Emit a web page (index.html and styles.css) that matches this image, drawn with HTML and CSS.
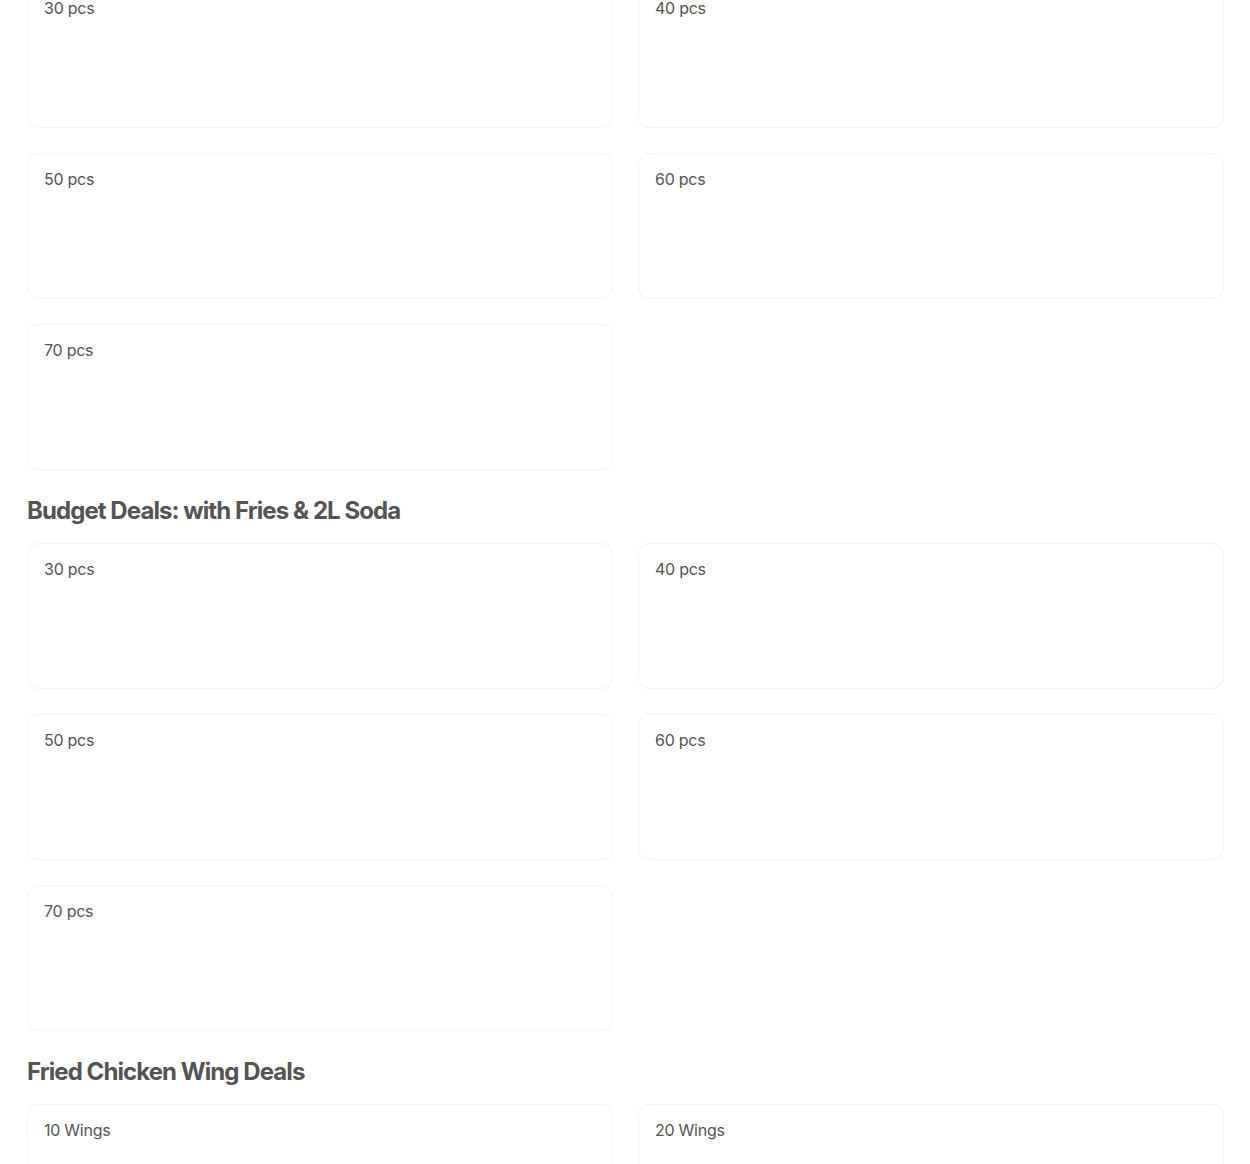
FILE: index.html
```html
<!DOCTYPE html>
<html>
<head>
<meta charset="utf-8">
<link rel="stylesheet" href="styles.css">
</head>
<body>
<main class="menu">
  <section class="section first">
    <div class="grid">
      <div class="card"><span class="name">30 pcs</span></div>
      <div class="card"><span class="name">40 pcs</span></div>
      <div class="card"><span class="name">50 pcs</span></div>
      <div class="card"><span class="name">60 pcs</span></div>
      <div class="card"><span class="name">70 pcs</span></div>
    </div>
  </section>
  <section class="section">
    <h2 class="title">Budget Deals: with Fries &amp; 2L Soda</h2>
    <div class="grid">
      <div class="card"><span class="name">30 pcs</span></div>
      <div class="card"><span class="name">40 pcs</span></div>
      <div class="card"><span class="name">50 pcs</span></div>
      <div class="card"><span class="name">60 pcs</span></div>
      <div class="card"><span class="name">70 pcs</span></div>
    </div>
  </section>
  <section class="section">
    <h2 class="title">Fried Chicken Wing Deals</h2>
    <div class="grid">
      <div class="card"><span class="name">10 Wings</span></div>
      <div class="card"><span class="name">20 Wings</span></div>
    </div>
  </section>
</main>
</body>
</html>
```
FILE: styles.css
```css
html, body {
  margin: 0;
  padding: 0;
  background: #ffffff;
}
body {
  font-family: Inter, "Noto Sans", "Liberation Sans", sans-serif;
  color: #545454;
  overflow: hidden;
}
.menu {
  margin: -18px 26px 0 27px;
}
.title {
  margin: 25px 0 16px;
  font-size: 24px;
  line-height: 32px;
  font-weight: 700;
  letter-spacing: -0.93px;
  color: #545454;
}
.grid {
  display: grid;
  grid-template-columns: 1fr 1fr;
  column-gap: 25px;
  row-gap: 25px;
}
.card {
  height: 146px;
  box-sizing: border-box;
  border: 1px solid #f3f3f3;
  border-radius: 12px;
  box-shadow: 0 0 2px rgba(0, 0, 0, 0.02);
  padding: 15px 16px;
  background: #fff;
}
.name {
  display: block;
  font-size: 16px;
  line-height: 20px;
  letter-spacing: -0.25px;
  color: #545454;
}
```
